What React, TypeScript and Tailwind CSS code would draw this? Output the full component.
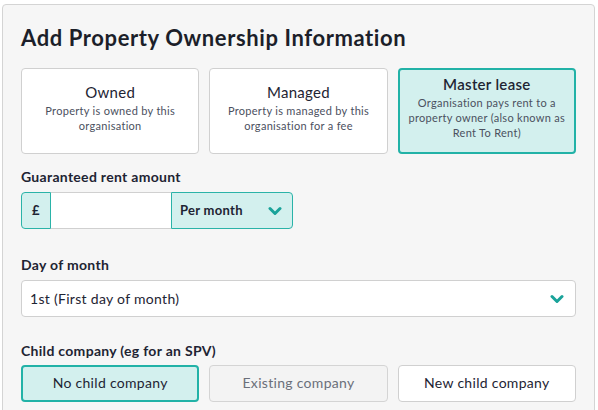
import React from "react";

const Chevron = ({ className = "" }: { className?: string }) => (
  <svg width="14" height="10" viewBox="0 0 14 10" className={className}>
    <polyline points="2,2.5 7,7.5 12,2.5" fill="none" stroke="#1aa39a" strokeWidth="3" strokeLinecap="round" strokeLinejoin="round" />
  </svg>
);

export default function App() {
  const font = { fontFamily: "Lato, 'Noto Sans', sans-serif" };
  return (
    <div className="bg-white min-h-screen pt-[4px] pl-[2px] pr-[3px] text-[#1e2433] tracking-[0.3px]" style={font}>
      <div className="border border-[#d4d4d4] rounded-[4px] bg-[#f6f6f6] px-[18px] pt-[19px] pb-[20px]">
        <h1 className="text-[22px] leading-[28px] font-bold text-[#1c1f2a] tracking-[0.6px]">Add Property Ownership Information</h1>

        <div className="grid grid-cols-3 gap-[10px] mt-[16px]">
          <div className="h-[86px] bg-white border border-[#d0d0d0] rounded-[4px] flex flex-col items-center justify-center text-center px-2 pb-[8px]">
            <div className="text-[15px] leading-[20px] text-[#1e2433]">Owned</div>
            <div className="text-[11px] leading-[15px] text-[#4b5060] mt-[1px]">Property is owned by this<br />organisation</div>
          </div>
          <div className="h-[86px] bg-white border border-[#d0d0d0] rounded-[4px] flex flex-col items-center justify-center text-center px-2 pb-[8px]">
            <div className="text-[15px] leading-[20px] text-[#1e2433]">Managed</div>
            <div className="text-[11px] leading-[15px] text-[#4b5060] mt-[1px]">Property is managed by this<br />organisation for a fee</div>
          </div>
          <div className="h-[86px] bg-[#d3f0ee] border-2 border-[#22b2a7] rounded-[4px] flex flex-col items-center justify-center text-center px-2 pb-[8px]">
            <div className="text-[15px] leading-[20px] font-semibold text-[#1e2433]">Master lease</div>
            <div className="text-[11px] leading-[15px] text-[#4b5060] mt-[1px]">Organisation pays rent to a<br />property owner (also known as<br />Rent To Rent)</div>
          </div>
        </div>

        <div className="mt-[14px] text-[14px] leading-[18px] font-bold">Guaranteed rent amount</div>
        <div className="flex mt-[6px] h-[37px] w-[272px]">
          <div className="w-[30px] flex items-center justify-center bg-[#d3f0ee] border border-[#2ab3a8] rounded-l-[4px] text-[13px] font-bold">£</div>
          <div className="w-[120px] bg-white border-y border-[#d0d0d0]"></div>
          <div className="flex-1 flex items-center justify-between pl-[8px] pr-[10px] bg-[#d3f0ee] border border-[#2ab3a8] rounded-r-[4px]">
            <span className="text-[13px] font-bold">Per month</span>
            <Chevron />
          </div>
        </div>

        <div className="mt-[27px] text-[14px] leading-[18px] font-bold">Day of month</div>
        <div className="mt-[6px] h-[37px] bg-white border border-[#d0d0d0] rounded-[4px] flex items-center justify-between pl-[8px] pr-[11px]">
          <span className="text-[14px]">1st (First day of month)</span>
          <Chevron />
        </div>

        <div className="mt-[25px] text-[14px] leading-[18px] font-bold">Child company (eg for an SPV)</div>
        <div className="grid grid-cols-3 gap-[10px] mt-[5px]">
          <div className="h-[37px] bg-[#d3f0ee] border-2 border-[#22b2a7] rounded-[4px] flex items-center justify-center text-[14px] pb-[2px]">No child company</div>
          <div className="h-[37px] bg-[#f3f3f3] border border-[#d4d4d4] rounded-[4px] flex items-center justify-center text-[14px] text-[#6b6f7a] pb-[2px]">Existing company</div>
          <div className="h-[37px] bg-white border border-[#d0d0d0] rounded-[4px] flex items-center justify-center text-[14px] pb-[2px]">New child company</div>
        </div>
      </div>
    </div>
  );
}
